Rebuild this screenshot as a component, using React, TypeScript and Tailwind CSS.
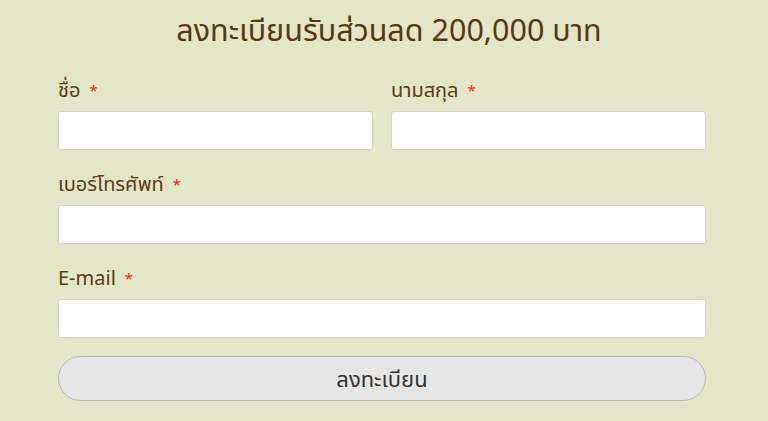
import React from "react";

const fields = [
  { label: "เบอร์โทรศัพท์", type: "tel" },
  { label: "E-mail", type: "email" },
];

function Label({ text }: { text: string }) {
  return (
    <label className="block text-[20px] leading-[22px] pb-[2px] text-[#5e3c15]">
      {text}
      <span className="ml-[9px] text-[#ff1a1a] text-[15px] align-top">*</span>
    </label>
  );
}

function Input({ type = "text" }: { type?: string }) {
  return (
    <input
      type={type}
      className="block w-full h-[39px] bg-white border border-[#d2d2cc] rounded-[3px] px-3 outline-none"
    />
  );
}

export default function App() {
  return (
    <div
      className="w-[768px] h-[421px] bg-[#e4e6c8] overflow-hidden"
      style={{ fontFamily: '"Noto Sans", "Noto Sans Thai", "Liberation Sans", sans-serif' }}
    >
      <form className="w-[648px] ml-[58px] pt-[11px]">
        <h2 className="text-center pl-[14px] text-[30.5px] leading-[36px] text-[#5a3811] mb-[32px]">
          ลงทะเบียนรับส่วนลด 200,000 บาท
        </h2>

        <div className="grid grid-cols-2 gap-[18px]">
          <div>
            <Label text="ชื่อ" />
            <div className="mt-[8px]">
              <Input />
            </div>
          </div>
          <div>
            <Label text="นามสกุล" />
            <div className="mt-[8px]">
              <Input />
            </div>
          </div>
        </div>

        {fields.map((f) => (
          <div key={f.label} className="mt-[23px]">
            <Label text={f.label} />
            <div className="mt-[8px]">
              <Input type={f.type} />
            </div>
          </div>
        ))}

        <button
          type="button"
          className="mt-[18px] w-full h-[45px] rounded-full bg-[#e6e6e6] border border-[#b8b8b8] text-[22px] text-[#333333]"
        >
          ลงทะเบียน
        </button>
      </form>
    </div>
  );
}
